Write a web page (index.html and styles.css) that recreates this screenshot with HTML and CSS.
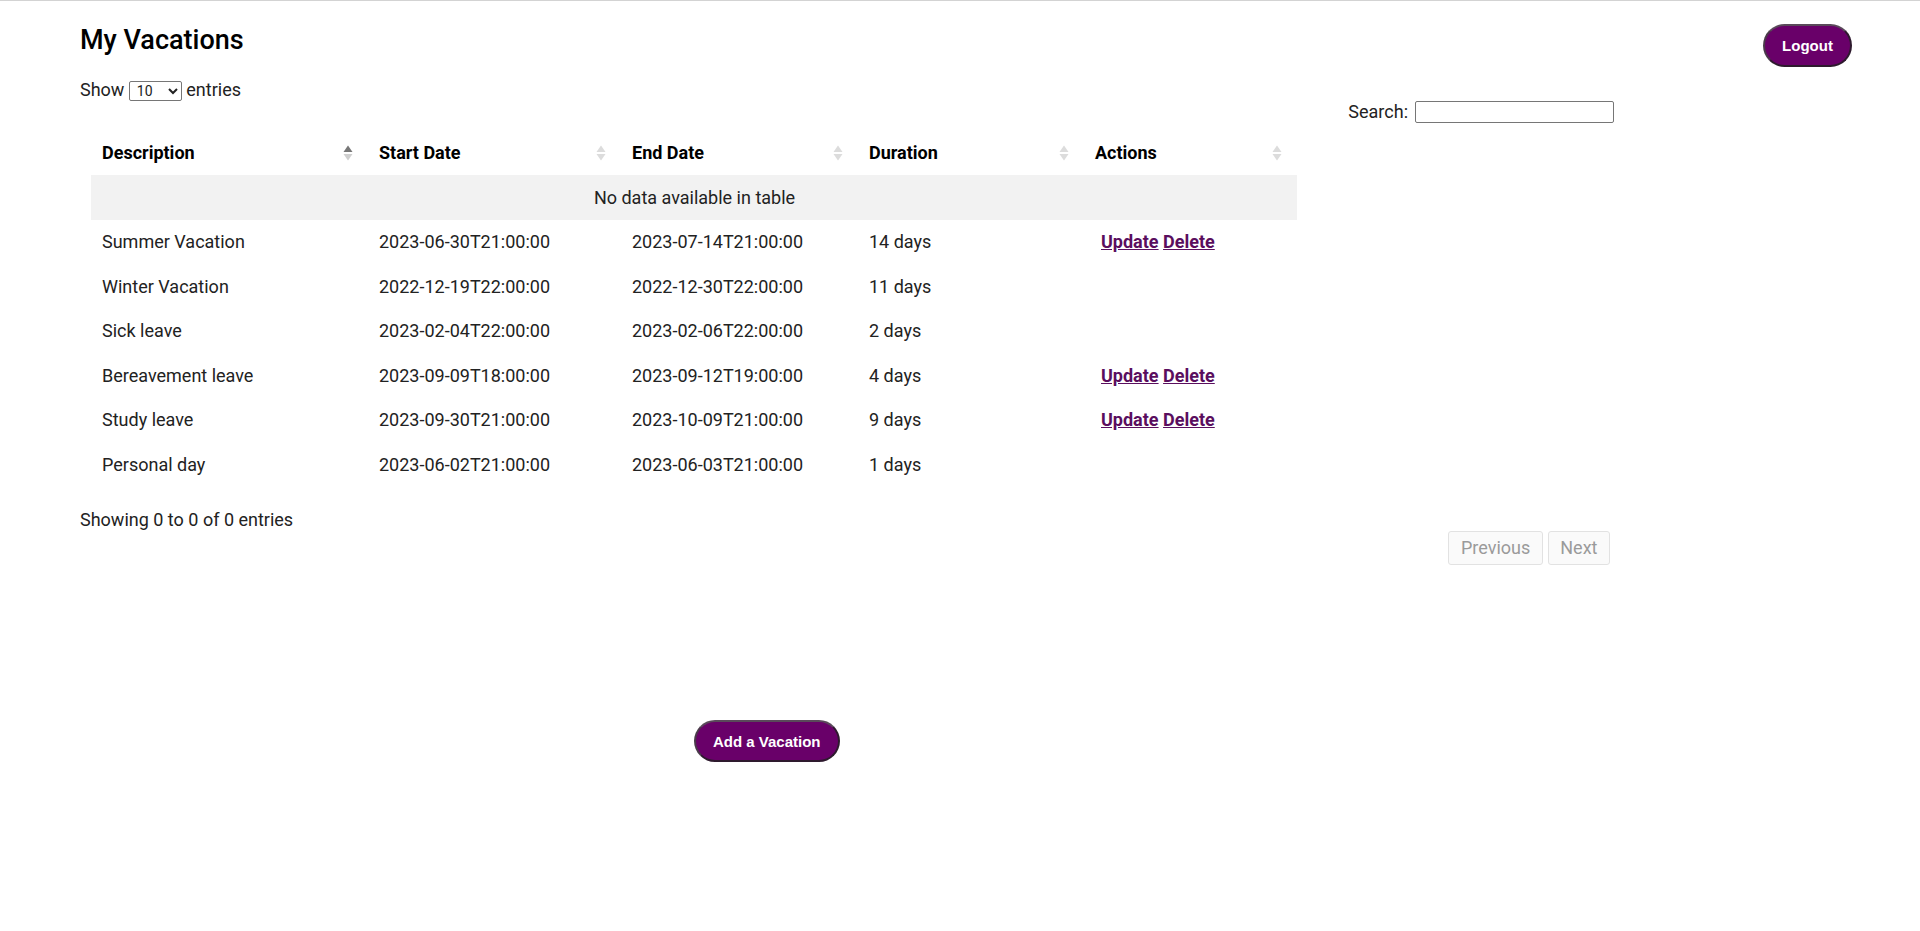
FILE: index.html
```html
<!DOCTYPE html>
<html lang="en">
<head>
<meta charset="utf-8">
<title>My Vacations</title>
<link rel="stylesheet" href="styles.css">
</head>
<body>
<header class="top-bar">
  <h1 class="page-title">My Vacations</h1>
  <button class="pill-btn logout-btn" type="button">Logout</button>
</header>

<main class="dt-wrapper">
  <div class="dt-length">
    <label>Show
      <select class="dt-select">
        <option>10</option>
        <option>25</option>
        <option>50</option>
        <option>100</option>
      </select>
      entries</label>
  </div>
  <div class="dt-filter">
    <label>Search:<input class="dt-search" type="search"></label>
  </div>

  <table class="dt-table">
    <colgroup>
      <col class="col-desc">
      <col class="col-start">
      <col class="col-end">
      <col class="col-dur">
      <col class="col-act">
    </colgroup>
    <thead>
      <tr>
        <th><div class="th-inner"><span>Description</span><svg class="sort-icon asc" viewBox="0 0 10 16" width="10" height="16"><polygon class="up" points="0.5,7 5,0.5 9.5,7"/><polygon class="down" points="0.5,9 5,15.5 9.5,9"/></svg></div></th>
        <th><div class="th-inner"><span>Start Date</span><svg class="sort-icon" viewBox="0 0 10 16" width="10" height="16"><polygon class="up" points="0.5,7 5,0.5 9.5,7"/><polygon class="down" points="0.5,9 5,15.5 9.5,9"/></svg></div></th>
        <th><div class="th-inner"><span>End Date</span><svg class="sort-icon" viewBox="0 0 10 16" width="10" height="16"><polygon class="up" points="0.5,7 5,0.5 9.5,7"/><polygon class="down" points="0.5,9 5,15.5 9.5,9"/></svg></div></th>
        <th><div class="th-inner"><span>Duration</span><svg class="sort-icon" viewBox="0 0 10 16" width="10" height="16"><polygon class="up" points="0.5,7 5,0.5 9.5,7"/><polygon class="down" points="0.5,9 5,15.5 9.5,9"/></svg></div></th>
        <th><div class="th-inner"><span>Actions</span><svg class="sort-icon" viewBox="0 0 10 16" width="10" height="16"><polygon class="up" points="0.5,7 5,0.5 9.5,7"/><polygon class="down" points="0.5,9 5,15.5 9.5,9"/></svg></div></th>
      </tr>
    </thead>
    <tbody>
      <tr class="empty-row"><td colspan="5">No data available in table</td></tr>
      <tr>
        <td>Summer Vacation</td>
        <td>2023-06-30T21:00:00</td>
        <td>2023-07-14T21:00:00</td>
        <td>14 days</td>
        <td class="actions"><a href="#" class="act-link">Update</a> <a href="#" class="act-link">Delete</a></td>
      </tr>
      <tr>
        <td>Winter Vacation</td>
        <td>2022-12-19T22:00:00</td>
        <td>2022-12-30T22:00:00</td>
        <td>11 days</td>
        <td class="actions"></td>
      </tr>
      <tr>
        <td>Sick leave</td>
        <td>2023-02-04T22:00:00</td>
        <td>2023-02-06T22:00:00</td>
        <td>2 days</td>
        <td class="actions"></td>
      </tr>
      <tr>
        <td>Bereavement leave</td>
        <td>2023-09-09T18:00:00</td>
        <td>2023-09-12T19:00:00</td>
        <td>4 days</td>
        <td class="actions"><a href="#" class="act-link">Update</a> <a href="#" class="act-link">Delete</a></td>
      </tr>
      <tr>
        <td>Study leave</td>
        <td>2023-09-30T21:00:00</td>
        <td>2023-10-09T21:00:00</td>
        <td>9 days</td>
        <td class="actions"><a href="#" class="act-link">Update</a> <a href="#" class="act-link">Delete</a></td>
      </tr>
      <tr>
        <td>Personal day</td>
        <td>2023-06-02T21:00:00</td>
        <td>2023-06-03T21:00:00</td>
        <td>1 days</td>
        <td class="actions"></td>
      </tr>
    </tbody>
  </table>

  <div class="dt-info">Showing 0 to 0 of 0 entries</div>
  <div class="dt-paginate">
    <span class="page-btn disabled">Previous</span>
    <span class="page-btn disabled">Next</span>
  </div>

  <div class="add-row">
    <button class="pill-btn add-btn" type="button">Add a Vacation</button>
  </div>
</main>
</body>
</html>
```

FILE: styles.css
```css
html, body {
  margin: 0;
  padding: 0;
  background: #ffffff;
}

body {
  border-top: 1px solid #d3d3d3;
  font-family: Roboto, "Liberation Sans", Arial, sans-serif;
  font-size: 18px;
  color: #222222;
}

.top-bar {
  display: flex;
  justify-content: space-between;
  align-items: flex-start;
  padding: 23px 68px 0 80px;
  height: 44px;
}

.page-title {
  margin: 0;
  font-size: 27px;
  font-weight: 500;
  line-height: 33px;
  color: #000000;
}

.pill-btn {
  font-family: "Liberation Sans", Arial, sans-serif;
  font-weight: 700;
  font-size: 15px;
  color: #ffffff;
  background: #690069;
  border: 2px solid #2e1a2e;
  border-top-color: #5a4a5a;
  border-left-color: #4a3a4a;
  border-radius: 22px;
  box-sizing: border-box;
  height: 43px;
  padding: 0 17px;
  white-space: nowrap;
  cursor: pointer;
}

.logout-btn {
  width: 89px;
}

.dt-wrapper {
  width: 1535px;
  margin-left: 80px;
}

.dt-length {
  margin-top: 11px;
  height: 21px;
  line-height: 21px;
}

.dt-select {
  font-family: Roboto, "Liberation Sans", Arial, sans-serif;
  font-size: 14px;
  width: 53px;
  height: 20px;
  margin: 0;
  padding: 0 0 0 3px;
  border: 1px solid #767676;
  border-radius: 2px;
  background: #ffffff;
  color: #222222;
  vertical-align: 0;
}

.dt-filter {
  display: flex;
  justify-content: flex-end;
  margin-top: 1px;
  height: 22px;
  line-height: 22px;
  padding-right: 1px;
}

.dt-search {
  box-sizing: border-box;
  width: 199px;
  height: 22px;
  margin-left: 7px;
  border: 1px solid #767676;
  border-radius: 2px;
  vertical-align: top;
  font-size: 14px;
}

.dt-table {
  table-layout: fixed;
  width: 1206px;
  margin: 8px 0 0 11px;
  border-collapse: collapse;
  border-spacing: 0;
}

.col-desc { width: 277px; }
.col-start { width: 253px; }
.col-end { width: 237px; }
.col-dur { width: 226px; }
.col-act { width: 213px; }

.dt-table th {
  padding: 10px 10px 10px 11px;
  line-height: 24px;
  text-align: left;
  font-weight: 700;
  color: #000000;
}

.th-inner {
  display: flex;
  justify-content: space-between;
  align-items: center;
}

.sort-icon {
  margin-right: 5px;
  flex: none;
}

.sort-icon polygon {
  fill: #dcdcdc;
}

.sort-icon.asc .up {
  fill: #777777;
}

.sort-icon.asc .down {
  fill: #cfcfcf;
}

.dt-table td {
  padding: 8px 10px 8px 11px;
  line-height: 28.5px;
  white-space: nowrap;
}

.empty-row td {
  background: #f2f2f2;
  text-align: center;
  line-height: 29px;
}

.actions {
  padding-left: 17px !important;
}

.act-link {
  color: #5a0e5e;
  font-weight: 700;
  text-decoration: underline;
}

.dt-info {
  padding-top: 22px;
  line-height: 21px;
}

.dt-paginate {
  display: flex;
  justify-content: flex-end;
  gap: 5px;
  margin-top: 1px;
  padding-right: 5px;
}

.page-btn {
  box-sizing: border-box;
  height: 34px;
  line-height: 32px;
  padding: 0 11.5px;
  border: 1px solid #e2e2e2;
  border-radius: 3px;
  background: #fafafa;
  color: #9a9a9a;
}

.add-row {
  margin-top: 155px;
  padding-left: 614px;
}

.add-btn {
  height: 42px;
}
```
